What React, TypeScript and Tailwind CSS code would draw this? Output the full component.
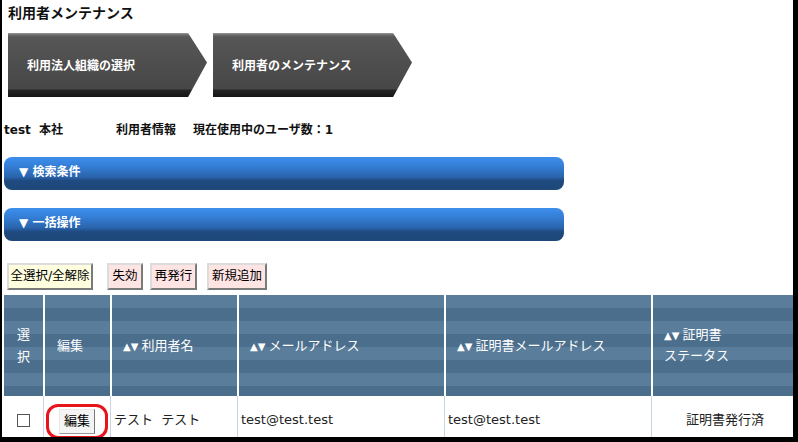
const font = "font-['DejaVu_Sans','Noto_Sans_CJK_JP',sans-serif]"

function StepArrow({ label }: { label: string }) {
  return (
    <div className="relative w-[199px] h-[64px] [clip-path:polygon(0_0,90.5%_0,100%_46%,90.5%_100%,0_100%)] bg-[linear-gradient(to_bottom,#9a9a9a_0px,#6a6a6a_2px,#575757_4px,#4e4e4e_30px,#474747_56px,#262626_57px,#151515_64px)]">
      <div className="flex h-[64px] items-center pl-[19px] pt-[1px] text-[12px] font-bold text-white">{label}</div>
    </div>
  )
}

function BlueBar({ label }: { label: string }) {
  return (
    <div className="ml-[2px] flex h-[33px] w-[560px] items-center rounded-[8px] bg-[linear-gradient(to_bottom,#3d8fee_0%,#3580d8_25%,#2a64ad_60%,#1f4a80_72%,#1e4879_100%)] pb-[4px] pl-[15px] text-[12px] font-bold text-white">
      ▼ {label}
    </div>
  )
}

function ActionButton({ label, tone, width }: { label: string; tone: "yellow" | "pink"; width: string }) {
  return (
    <button
      className={`h-[27px] ${width} border-2 border-t-[#dcdcdc] border-l-[#dcdcdc] border-r-[#7a7a7a] border-b-[#7a7a7a] px-0 text-[12.5px] text-black ${
        tone === "yellow" ? "bg-[#ffffe0]" : "bg-[#ffe4e4]"
      }`}
    >
      {label}
    </button>
  )
}

function Sort() {
  return <span className="mr-[3px] text-[10px]">▲▼</span>
}

export default function App() {
  return (
    <div className={`relative h-[442px] w-[798px] overflow-hidden border-l-2 border-r-[5px] border-b-[5px] border-black bg-white text-[#222] ${font}`}>
      {/* Title */}
      <div className="mt-[3px] pl-[6px] text-[14px] font-bold leading-[20px] text-[#111]">利用者メンテナンス</div>

      {/* Steps */}
      <div className="mt-[10px] flex gap-[6px] pl-[6px]">
        <StepArrow label="利用法人組織の選択" />
        <StepArrow label="利用者のメンテナンス" />
      </div>

      {/* Info */}
      <div className="mt-[25px] flex h-[16px] items-center pl-[2px] text-[12px] font-bold leading-[16px] text-[#111]">
        <span className="w-[112px]">test&nbsp;&nbsp;本社</span>
        <span className="w-[77px]">利用者情報</span>
        <span>現在使用中のユーザ数：1</span>
      </div>

      <div className="mt-[19px]">
        <BlueBar label="検索条件" />
      </div>
      <div className="mt-[18px]">
        <BlueBar label="一括操作" />
      </div>

      {/* Buttons */}
      <div className="mt-[22px] flex pl-[5px]">
        <ActionButton label="全選択/全解除" tone="yellow" width="w-[86px]" />
        <div className="ml-[14px]">
          <ActionButton label="失効" tone="pink" width="w-[36px]" />
        </div>
        <div className="ml-[7px]">
          <ActionButton label="再発行" tone="pink" width="w-[47px]" />
        </div>
        <div className="ml-[10px]">
          <ActionButton label="新規追加" tone="pink" width="w-[60px]" />
        </div>
      </div>

      {/* Table */}
      <table className="ml-[2px] mt-[5px] w-[900px] table-fixed border-separate border-spacing-0 text-[13px]">
        <colgroup>
          <col className="w-[39px]" />
          <col className="w-[67px]" />
          <col className="w-[127px]" />
          <col className="w-[207px]" />
          <col className="w-[207px]" />
          <col className="w-[253px]" />
        </colgroup>
        <thead>
          <tr className="h-[101px] bg-[repeating-linear-gradient(to_bottom,#5a7d9b_0px,#5a7d9b_13px,#4b6e8d_13px,#4b6e8d_26px)] text-left font-normal text-white">
            <th className="text-center font-normal leading-[22px]">
              選<br />択
            </th>
            <th className="border-l-2 border-white pl-[12px] font-normal">編集</th>
            <th className="border-l-2 border-white pl-[11px] font-normal">
              <Sort />利用者名
            </th>
            <th className="border-l-2 border-white pl-[11px] font-normal">
              <Sort />メールアドレス
            </th>
            <th className="border-l-2 border-white pl-[11px] font-normal">
              <Sort />証明書メールアドレス
            </th>
            <th className="border-l-2 border-white pl-[11px] font-normal leading-[20px]">
              <Sort />証明書
              <br />
              ステータス
            </th>
          </tr>
        </thead>
        <tbody>
          <tr className="h-[48px]">
            <td className="text-center align-middle">
              <span className="inline-block h-[13px] w-[13px] border border-[#555] bg-white align-middle" />
            </td>
            <td className="border-l border-[#c8d6e2] pl-[2px] align-middle">
              <span className="inline-flex h-[35px] w-[62px] items-center justify-center rounded-[12px] border-[3px] border-[#e8141c] mt-[2px]">
                <span className="inline-flex h-[25px] items-center border border-t-[#e8e8e8] border-l-[#e8e8e8] border-r-[#777] border-b-[#999] bg-[#f4f4f4] px-[4px] text-[13px] text-black">
                  編集
                </span>
              </span>
            </td>
            <td className="border-l border-[#c8d6e2] pl-[3px] align-middle">テスト&nbsp;&nbsp;テスト</td>
            <td className="border-l border-[#c8d6e2] pl-[3px] align-middle">test@test.test</td>
            <td className="border-l border-[#c8d6e2] pl-[3px] align-middle">test@test.test</td>
            <td className="border-l border-[#c8d6e2] align-middle">
              <div className="w-[146px] text-center">証明書発行済</div>
            </td>
          </tr>
        </tbody>
      </table>
    </div>
  )
}
